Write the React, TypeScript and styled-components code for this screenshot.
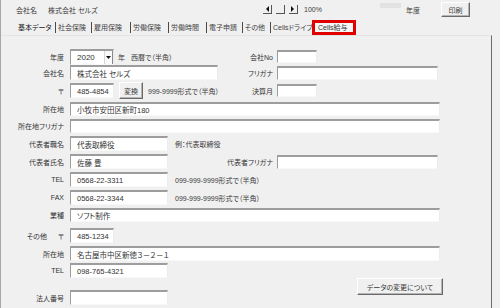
import styled, { createGlobalStyle } from "styled-components";

const GlobalStyle = createGlobalStyle`
  html, body {
    margin: 0;
    padding: 0;
    background: #f0f0f0;
  }
  body {
    font-family: "Liberation Sans", "Noto Sans CJK JP", sans-serif;
    font-feature-settings: "palt";
    color: #3a3a3a;
  }
`;

const Window = styled.div`
  width: 500px;
  height: 308px;
  box-sizing: border-box;
  overflow: hidden;
  border-left: 1px solid #a8a8a8;
`;

const TopBar = styled.div`
  height: 19px;
  display: flex;
  align-items: center;
  padding-left: 15px;
  font-size: 7px;
`;

const TopText = styled.span<{ $w?: number; $ml?: number }>`
  flex: none;
  white-space: nowrap;
  width: ${(p) => (p.$w ? `${p.$w}px` : "auto")};
  margin-left: ${(p) => p.$ml ?? 0}px;
`;

const NavGroup = styled.div`
  display: flex;
  align-items: center;
  gap: 4px;
`;

const NavButton = styled.span`
  width: 9px;
  height: 9px;
  box-sizing: border-box;
  border-right: 1px solid #555;
  border-bottom: 1px solid #555;
  display: flex;
  align-items: center;
  justify-content: center;
`;

const Ghost = styled.span`
  width: 21px;
  height: 5px;
  background: #e2e2e2;
  align-self: flex-start;
  margin: 3px 0 0 58px;
`;

const RaisedButton = styled.button<{ $w: number; $h: number; $ml?: number; $mt?: number }>`
  flex: none;
  width: ${(p) => p.$w}px;
  height: ${(p) => p.$h}px;
  margin: ${(p) => p.$mt ?? 0}px 0 0 ${(p) => p.$ml ?? 0}px;
  padding: 0;
  box-sizing: border-box;
  background: #f0f0f0;
  font-family: inherit;
  font-feature-settings: "palt";
  font-size: 7px;
  color: #3a3a3a;
  border-top: 1px solid #ffffff;
  border-left: 1px solid #ffffff;
  border-right: 1px solid #6a6a6a;
  border-bottom: 1px solid #6a6a6a;
  box-shadow: inset -1px -1px 0 #b4b4b4;
`;

const TabStrip = styled.div`
  height: 15px;
  margin-top: 1px;
  display: flex;
  align-items: center;
  padding-left: 14px;
  font-size: 7px;
`;

const Tab = styled.div<{ $w: number; $first?: boolean; $plain?: boolean }>`
  flex: none;
  width: ${(p) => p.$w}px;
  height: 11px;
  line-height: 11px;
  box-sizing: border-box;
  padding-left: ${(p) => (p.$first ? 3 : 2)}px;
  border-right: ${(p) => (p.$plain ? "none" : "1px solid #4a4a4a")};
  white-space: nowrap;
  color: ${(p) => (p.$first ? "#222" : "#444")};
`;

const MarkedTab = styled.div`
  flex: none;
  width: 44px;
  height: 15px;
  box-sizing: border-box;
  border: 3px solid #e00000;
  background: #f6f6f6;
  padding-left: 3px;
  line-height: 9px;
  white-space: nowrap;
  color: #333;
`;

const Panel = styled.div`
  width: 491px;
  height: 273px;
  box-sizing: border-box;
  border-top: 1px solid #e4e4e4;
  border-right: 1px solid #6b6b6b;
  padding: 12px 0 0 1px;
  display: flex;
  flex-direction: column;
`;

const Row = styled.div<{ $mt?: number }>`
  display: flex;
  align-items: center;
  height: 17px;
  margin-top: ${(p) => p.$mt ?? 0}px;
`;

const Label = styled.div`
  flex: none;
  width: 62px;
  margin-right: 6px;
  text-align: right;
  white-space: nowrap;
  font-size: 7px;
  color: #333;
`;

const SubLabel = styled.span`
  margin-right: 11px;
`;

const LeftCell = styled.div`
  flex: none;
  width: 153px;
  display: flex;
  align-items: center;
`;

const RightLabel = styled.div`
  flex: none;
  width: 50px;
  margin-right: 4px;
  text-align: right;
  white-space: nowrap;
  font-size: 7px;
  color: #333;
`;

const Field = styled.div<{ $w: number; $h?: number }>`
  flex: none;
  width: ${(p) => p.$w}px;
  height: ${(p) => p.$h ?? 15}px;
  box-sizing: border-box;
  background: #ffffff;
  border-top: 2px solid #9d9d9d;
  border-left: 1px solid #9d9d9d;
  border-right: 1px solid #ececec;
  border-bottom: 1px solid #f8f8f8;
  padding-left: 6px;
  display: flex;
  align-items: center;
  font-size: 7.5px;
  white-space: nowrap;
  overflow: hidden;
  color: #333;
`;

const SelectBox = styled(Field)`
  padding-left: 6px;
  padding-right: 0;
  justify-content: space-between;
  font-size: 8px;
`;

const Caret = styled.span`
  width: 9px;
  height: 100%;
  box-sizing: border-box;
  border-left: 1px solid #d6d6d6;
  border-right: 1px solid #8a8a8a;
  display: flex;
  align-items: center;
  justify-content: center;
  background: #fafafa;
`;

const Hint = styled.span<{ $ml?: number }>`
  margin-left: ${(p) => p.$ml ?? 6}px;
  font-size: 7px;
  white-space: nowrap;
  color: #3a3a3a;
`;

const BottomGroup = styled.div`
  display: flex;
  align-items: flex-start;
`;

const BottomColumn = styled.div`
  display: flex;
  flex-direction: column;
`;

const Triangle = ({ dir }: { dir: "left" | "right" | "down" }) => {
  const pts =
    dir === "left" ? "4,0 4,6 1,3" : dir === "right" ? "0,0 0,6 3,3" : "0,0 5,0 2.5,3";
  const w = dir === "down" ? 5 : 4;
  const h = dir === "down" ? 3 : 6;
  return (
    <svg width={w} height={h} viewBox={`0 0 ${w} ${h}`}>
      <polygon points={pts} fill="#111" />
    </svg>
  );
};

const App = () => {
  return (
    <>
      <GlobalStyle />
      <Window>
        <TopBar>
          <TopText $w={32}>会社名</TopText>
          <TopText $w={215}>株式会社 セルズ</TopText>
          <NavGroup>
            <NavButton>
              <Triangle dir="left" />
            </NavButton>
            <NavButton />
            <NavButton>
              <Triangle dir="right" />
            </NavButton>
          </NavGroup>
          <TopText $ml={6}>100%</TopText>
          <Ghost />
          <TopText $ml={5}>年度</TopText>
          <RaisedButton $w={29} $h={15} $ml={21}>
            印刷
          </RaisedButton>
        </TopBar>

        <TabStrip>
          <Tab $w={41} $first>
            基本データ
          </Tab>
          <Tab $w={36}>社会保険</Tab>
          <Tab $w={39}>雇用保険</Tab>
          <Tab $w={38}>労働保険</Tab>
          <Tab $w={38}>労働時間</Tab>
          <Tab $w={36}>電子申請</Tab>
          <Tab $w={28}>その他</Tab>
          <Tab $w={41} $plain>
            Cellsドライブ
          </Tab>
          <MarkedTab>Cells給与</MarkedTab>
        </TabStrip>

        <Panel>
          <Row>
            <Label>年度</Label>
            <LeftCell>
              <SelectBox $w={44} $h={16}>
                2020
                <Caret>
                  <Triangle dir="down" />
                </Caret>
              </SelectBox>
              <Hint $ml={4}>年</Hint>
              <Hint $ml={6}>西暦で（半角）</Hint>
            </LeftCell>
            <RightLabel>会社No</RightLabel>
            <Field $w={40} $h={13} />
          </Row>

          <Row $mt={-1}>
            <Label>会社名</Label>
            <LeftCell>
              <Field $w={148}>株式会社 セルズ</Field>
            </LeftCell>
            <RightLabel>フリガナ</RightLabel>
            <Field $w={161} $h={14} />
          </Row>

          <Row $mt={1}>
            <Label>〒</Label>
            <LeftCell>
              <Field $w={44}>485-4854</Field>
              <RaisedButton $w={24} $h={17} $ml={5}>
                変換
              </RaisedButton>
              <Hint $ml={5}>999-9999形式で（半角）</Hint>
            </LeftCell>
            <RightLabel>決算月</RightLabel>
            <Field $w={40} $h={13} />
          </Row>

          <Row $mt={1}>
            <Label>所在地</Label>
            <Field $w={370} $h={14}>
              小牧市安田区新町180
            </Field>
          </Row>

          <Row>
            <Label>所在地フリガナ</Label>
            <Field $w={370} $h={14} />
          </Row>

          <Row $mt={1}>
            <Label>代表者職名</Label>
            <LeftCell>
              <Field $w={98}>代表取締役</Field>
              <Hint $ml={7}>例：代表取締役</Hint>
            </LeftCell>
          </Row>

          <Row $mt={1}>
            <Label>代表者氏名</Label>
            <LeftCell>
              <Field $w={98}>佐藤 豊</Field>
            </LeftCell>
            <RightLabel>代表者フリガナ</RightLabel>
            <Field $w={161} $h={14} />
          </Row>

          <Row $mt={1}>
            <Label>TEL</Label>
            <LeftCell>
              <Field $w={98}>0568-22-3311</Field>
              <Hint $ml={7}>099-999-9999形式で（半角）</Hint>
            </LeftCell>
          </Row>

          <Row $mt={1}>
            <Label>FAX</Label>
            <LeftCell>
              <Field $w={98}>0568-22-3344</Field>
              <Hint $ml={7}>099-999-9999形式で（半角）</Hint>
            </LeftCell>
          </Row>

          <Row>
            <Label>業種</Label>
            <Field $w={370} $h={14}>
              ソフト制作
            </Field>
          </Row>

          <Row $mt={4}>
            <Label>
              <SubLabel>その他</SubLabel>〒
            </Label>
            <Field $w={44}>485-1234</Field>
          </Row>

          <Row $mt={1}>
            <Label>所在地</Label>
            <Field $w={370}>名古屋市中区新徳３－２－１</Field>
          </Row>

          <BottomGroup>
            <BottomColumn>
              <Row>
                <Label>TEL</Label>
                <Field $w={98}>098-765-4321</Field>
              </Row>
              <Row $mt={10}>
                <Label>法人番号</Label>
                <Field $w={98} />
              </Row>
            </BottomColumn>
            <RaisedButton $w={86} $h={17} $ml={189} $mt={16}>
              データの変更について
            </RaisedButton>
          </BottomGroup>
        </Panel>
      </Window>
    </>
  );
};

export default App;
